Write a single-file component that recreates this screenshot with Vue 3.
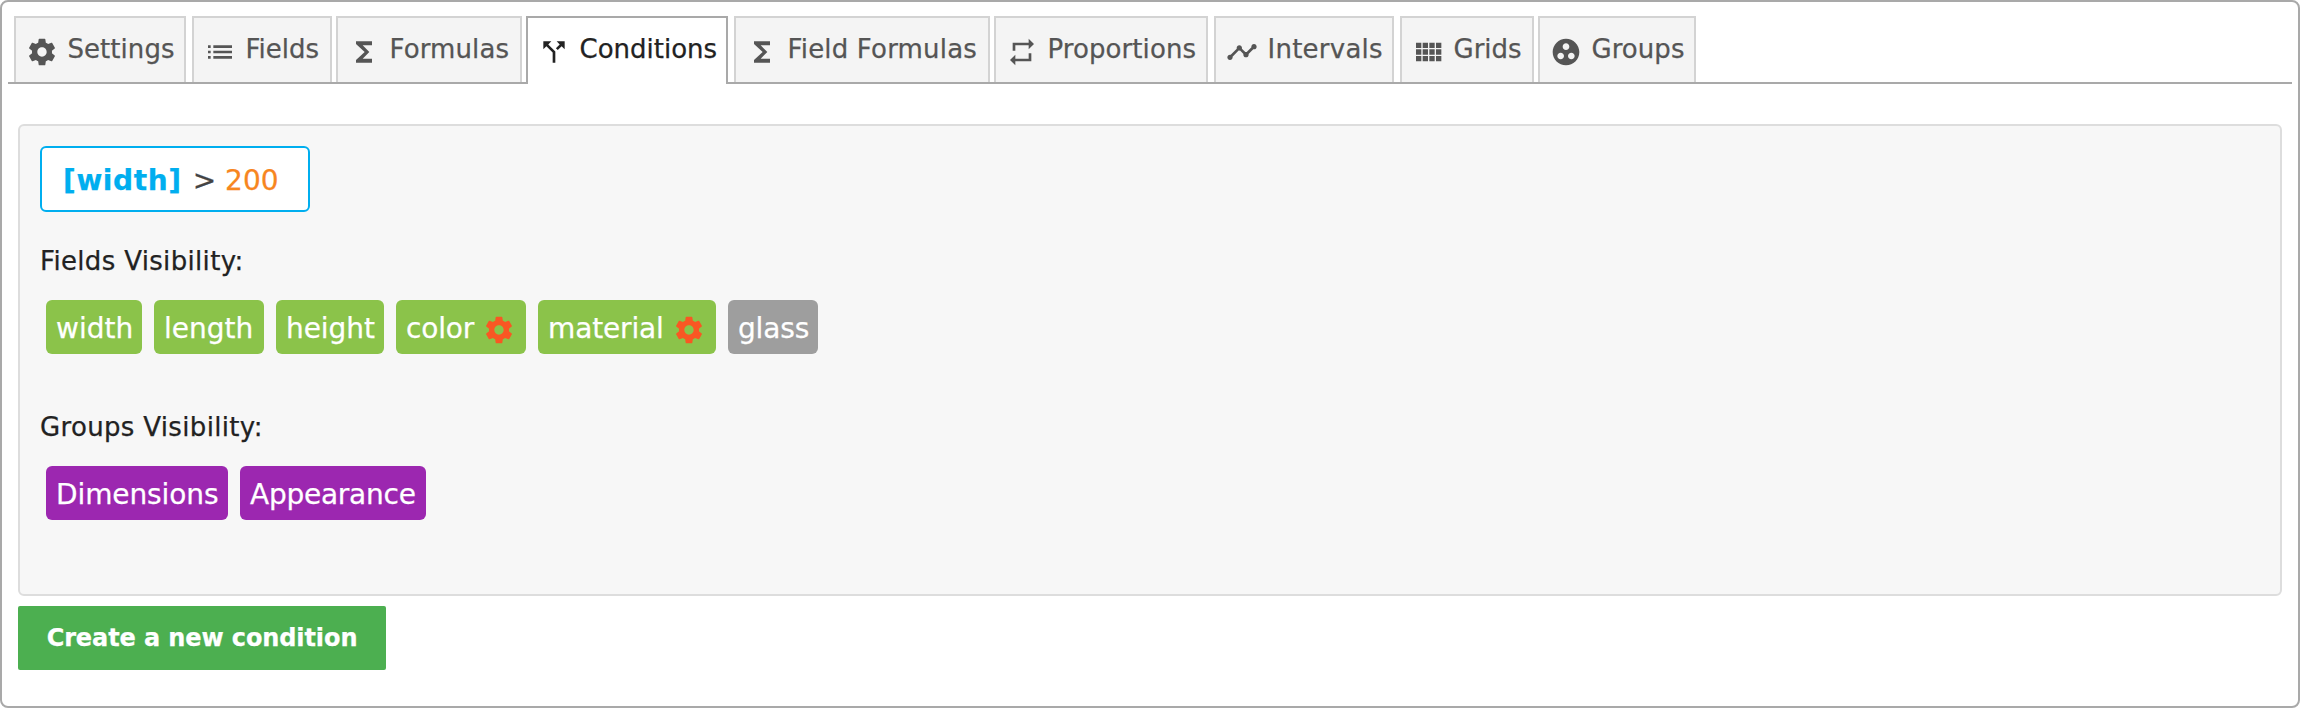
<script setup>
const icons = {
  settings: 'M19.43 12.98c.04-.32.07-.64.07-.98s-.03-.66-.07-.98l2.11-1.65c.19-.15.24-.42.12-.64l-2-3.46c-.12-.22-.39-.3-.61-.22l-2.49 1c-.52-.4-1.08-.73-1.69-.98l-.38-2.65C14.46 2.18 14.25 2 14 2h-4c-.25 0-.46.18-.49.42l-.38 2.65c-.61.25-1.17.59-1.69.98l-2.49-1c-.23-.09-.49 0-.61.22l-2 3.46c-.13.22-.07.49.12.64l2.11 1.65c-.04.32-.07.65-.07.98s.03.66.07.98l-2.11 1.65c-.19.15-.24.42-.12.64l2 3.46c.12.22.39.3.61.22l2.49-1c.52.4 1.08.73 1.69.98l.38 2.65c.03.24.24.42.49.42h4c.25 0 .46-.18.49-.42l.38-2.65c.61-.25 1.17-.59 1.69-.98l2.49 1c.23.09.49 0 .61-.22l2-3.46c.12-.22.07-.49-.12-.64l-2.11-1.65zM12 15.5c-1.93 0-3.5-1.57-3.5-3.5s1.57-3.5 3.5-3.5 3.5 1.57 3.5 3.5-1.57 3.5-3.5 3.5z',
  list: 'M3 13h2v-2H3v2zm0 4h2v-2H3v2zm0-8h2V7H3v2zm4 4h14v-2H7v2zm0 4h14v-2H7v2zM7 7v2h14V7H7z',
  sigma: 'M18 4H6v2l6.5 6L6 18v2h12v-3h-7l5-5-5-5h7z',
  split: 'M14 4l2.29 2.29-2.88 2.88 1.42 1.42 2.88-2.88L20 10V4zm-4 0H4v6l2.29-2.29 4.71 4.7V20h2v-8.41l-5.29-5.3z',
  repeat: 'M7 7h10v3l4-4-4-4v3H5v6h2V7zm10 10H7v-3l-4 4 4 4v-3h12v-6h-2v4z',
  timeline: 'M23 8c0 1.1-.9 2-2 2-.18 0-.35-.02-.51-.07l-3.56 3.55c.05.16.07.34.07.52 0 1.1-.9 2-2 2s-2-.9-2-2c0-.18.02-.36.07-.52l-2.55-2.55c-.16.05-.34.07-.52.07s-.36-.02-.52-.07l-4.55 4.56c.05.16.07.33.07.51 0 1.1-.9 2-2 2s-2-.9-2-2 .9-2 2-2c.18 0 .35.02.51.07l4.56-4.55C8.02 9.36 8 9.18 8 9c0-1.1.9-2 2-2s2 .9 2 2c0 .18-.02.36-.07.52l2.55 2.55c.16-.05.34-.07.52-.07s.36.02.52.07l3.55-3.56C19.02 8.35 19 8.18 19 8c0-1.1.9-2 2-2s2 .9 2 2z',
  grid: 'M3 9h4V5H3v4zm0 5h4v-4H3v4zm5 0h4v-4H8v4zm5 0h4v-4h-4v4zM8 9h4V5H8v4zm5-4v4h4V5h-4zm5 9h4v-4h-4v4zM3 19h4v-4H3v4zm5 0h4v-4H8v4zm5 0h4v-4h-4v4zm5 0h4v-4h-4v4zm0-14v4h4V5h-4z',
  groups: 'M12 2C6.48 2 2 6.48 2 12s4.48 10 10 10 10-4.48 10-10S17.52 2 12 2zM8 17.5c-1.38 0-2.5-1.12-2.5-2.5s1.12-2.5 2.5-2.5 2.5 1.12 2.5 2.5-1.12 2.5-2.5 2.5zM9.5 8c0-1.38 1.12-2.5 2.5-2.5s2.5 1.12 2.5 2.5-1.12 2.5-2.5 2.5S9.5 9.38 9.5 8zm6.5 9.5c-1.38 0-2.5-1.12-2.5-2.5s1.12-2.5 2.5-2.5 2.5 1.12 2.5 2.5-1.12 2.5-2.5 2.5z',
}
// width: tab width; gap: space before the next tab; track: letter spacing
const tabs = [
  { label: 'Settings', icon: 'settings', width: 172, gap: 6, track: 0.05 },
  { label: 'Fields', icon: 'list', width: 140, gap: 4, track: 0 },
  { label: 'Formulas', icon: 'sigma', width: 186, gap: 4, track: 0.12 },
  { label: 'Conditions', icon: 'split', width: 202, gap: 6, track: 0 },
  { label: 'Field Formulas', icon: 'sigma', width: 256, gap: 4, track: 0.18 },
  { label: 'Proportions', icon: 'repeat', width: 214, gap: 6, track: 0.08 },
  { label: 'Intervals', icon: 'timeline', width: 180, gap: 6, track: 0.25 },
  { label: 'Grids', icon: 'grid', width: 134, gap: 4, track: 0 },
  { label: 'Groups', icon: 'groups', width: 158, gap: 0, track: 0.05 },
]
const activeTab = 'Conditions'
const fields = [
  { label: 'width', width: 96, track: 0 },
  { label: 'length', width: 110, track: 0 },
  { label: 'height', width: 108, track: -0.05 },
  { label: 'color', width: 130, track: -0.2, gear: true },
  { label: 'material', width: 178, track: -0.15, gear: true },
  { label: 'glass', width: 90, track: -0.15, off: true },
]
const groups = [
  { label: 'Dimensions', width: 182, track: -0.1 },
  { label: 'Appearance', width: 186, track: -0.25 },
]
</script>

<template>
  <main class="window">
    <nav class="tabs">
      <a
        v-for="t in tabs"
        :key="t.label"
        class="tab"
        :class="{ active: t.label === activeTab }"
        :style="{ width: t.width + 'px', marginRight: t.gap + 'px' }"
      >
        <svg class="icon" viewBox="0 0 24 24"><path :d="icons[t.icon]" /></svg>
        <span class="tab-label" :style="{ letterSpacing: t.track + 'px' }">{{ t.label }}</span>
      </a>
    </nav>

    <section class="panel">
      <div class="expression"><b>[width]</b><span class="op">&gt;</span><span class="num">200</span></div>

      <h3 class="heading fields-heading">Fields Visibility:</h3>
      <div class="chips">
        <span v-for="f in fields" :key="f.label" class="chip" :class="{ off: f.off }" :style="{ width: f.width + 'px' }">
          <span :style="{ letterSpacing: f.track + 'px' }">{{ f.label }}</span>
          <svg v-if="f.gear" class="gear" viewBox="0 0 24 24"><path :d="icons.settings" /></svg>
        </span>
      </div>

      <h3 class="heading groups-heading">Groups Visibility:</h3>
      <div class="chips">
        <span v-for="g in groups" :key="g.label" class="chip group" :style="{ width: g.width + 'px' }">
          <span :style="{ letterSpacing: g.track + 'px' }">{{ g.label }}</span>
        </span>
      </div>
    </section>

    <button class="create">Create a new condition</button>
  </main>
</template>

<style>
body {
  background: #fff;
}
</style>

<style scoped>
.window {
  box-sizing: border-box;
  width: 2300px;
  height: 708px;
  border: 2px solid #a9a9a9;
  border-radius: 8px;
  padding: 14px 6px 0;
  background: #fff;
  color: #222;
  font-family: Verdana, "DejaVu Sans", sans-serif;
  font-size: 26px;
  -webkit-text-stroke: 0.25px currentColor;
}
.tabs {
  display: flex;
  height: 66px;
  padding-left: 6px;
  border-bottom: 2px solid #a9a9a9;
}
.tab {
  box-sizing: border-box;
  flex: none;
  display: flex;
  height: 66px;
  padding-left: 10px;
  border: 2px solid #d3d3d3;
  border-bottom: 0;
  background: #f4f4f4;
  color: #555;
  white-space: nowrap;
}
.tab.active {
  height: 68px;
  border-color: #a9a9a9;
  background: #fff;
  color: #222;
}
.icon {
  flex: none;
  width: 32px;
  height: 32px;
  margin: 18px 9.5px 0 0;
  fill: currentColor;
}
.tab-label {
  margin-top: 15px;
  line-height: 32px;
}
.panel {
  box-sizing: border-box;
  height: 472px;
  margin: 40px 10px 0;
  padding: 20px;
  border: 2px solid #ddd;
  border-radius: 6px;
  background: #f7f7f7;
}
.expression {
  box-sizing: border-box;
  width: 270px;
  height: 66px;
  padding-left: 21px;
  border: 2px solid #00aeef;
  border-radius: 6px;
  background: #fff;
  font-size: 28px;
  line-height: 65px;
  white-space: nowrap;
}
.expression b {
  color: #00aeef;
  letter-spacing: 0.6px;
}
.op {
  margin: 0 9px 0 11px;
  color: #444;
}
.num {
  color: #f7861f;
}
.heading {
  margin: 0;
  font-size: 26px;
  font-weight: 400;
  letter-spacing: 0.33px;
  line-height: 32px;
}
.fields-heading {
  padding: 33px 0 23px;
}
.groups-heading {
  padding: 57px 0 23px;
}
.chips {
  display: flex;
  gap: 12px;
  padding-left: 6px;
}
.chip {
  box-sizing: border-box;
  display: flex;
  height: 54px;
  padding-left: 10px;
  border-radius: 6px;
  background: #8bc34a;
  color: #fff;
  font-size: 28px;
  line-height: 57px;
  white-space: nowrap;
}
.chip.off {
  background: #9e9e9e;
}
.chip.group {
  background: #9c27b0;
}
.gear {
  flex: none;
  width: 32px;
  height: 32px;
  margin: 14px 11px 0 auto;
  fill: #f95723;
}
.create {
  display: block;
  width: 368px;
  height: 64px;
  margin: 10px 0 0 10px;
  padding: 0;
  border: 0;
  border-radius: 2px;
  background: #4caf50;
  color: #fff;
  font-family: inherit;
  font-size: 24px;
  font-weight: 700;
  letter-spacing: -0.1px;
  line-height: 64px;
}
</style>
